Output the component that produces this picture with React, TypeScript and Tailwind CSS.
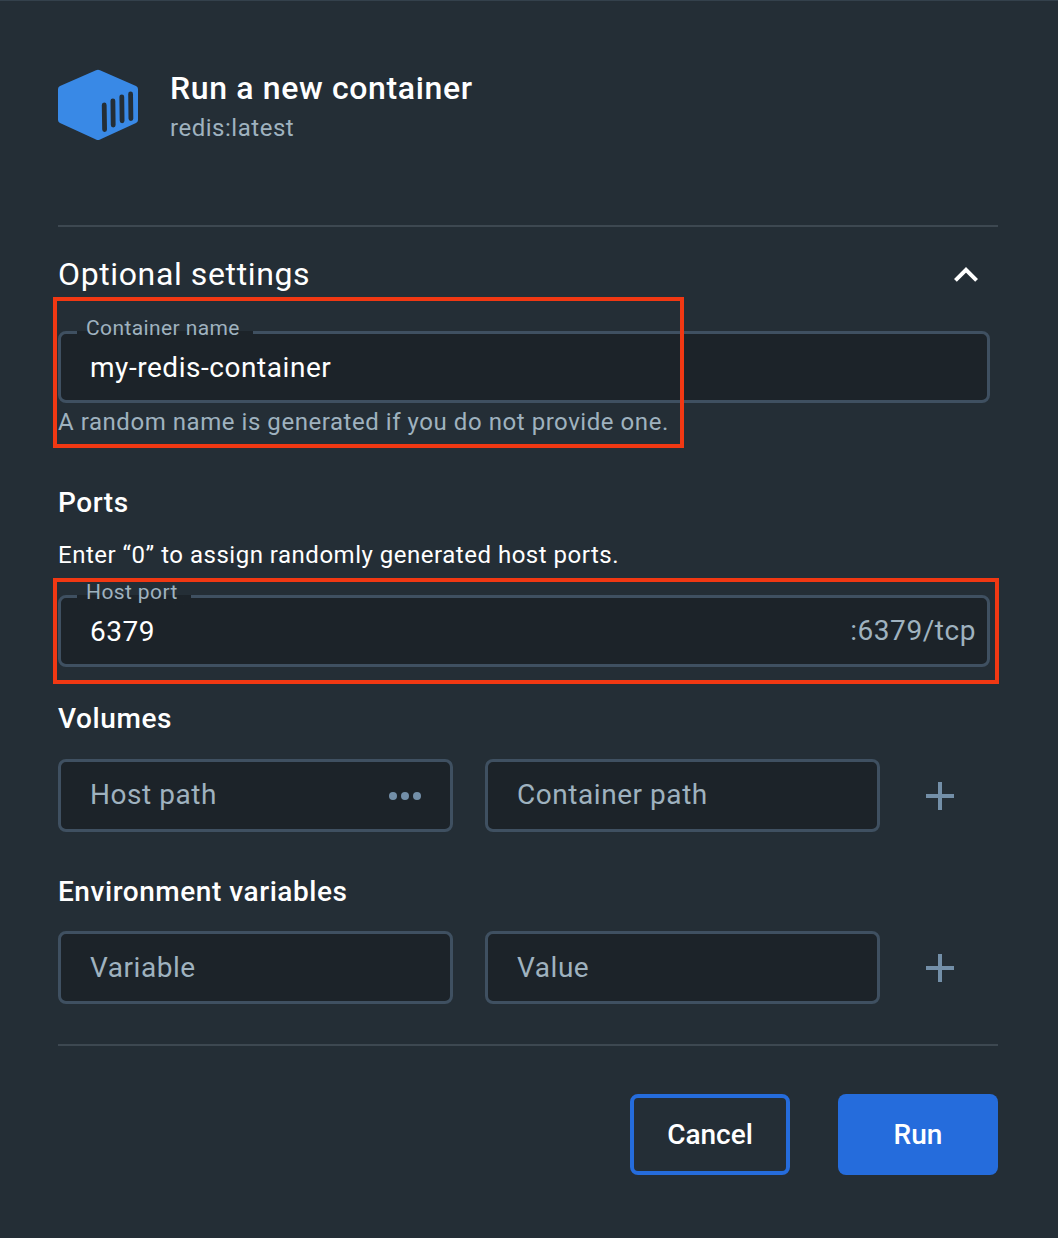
import React from 'react';

function Field({ className, label, children }: { className: string; label?: string; children: React.ReactNode }) {
  return (
    <div className={`relative flex items-center rounded-lg border-[3px] border-[#3f5061] bg-[#1c2329] pl-[29px] text-[28px] tracking-[0.55px] ${className}`}>
      {label && (
        <span className="absolute -top-[20px] left-4 h-[28px] bg-linear-to-b from-[#242e36] from-[17px] to-[#1c2329] to-[17px] pl-[9px] pr-[13px] text-[21px] leading-[28px] tracking-[0.4px] text-[#9fb2bf]">{label}</span>
      )}
      {children}
    </div>
  );
}

function Plus() {
  return (
    <svg className="ml-[46px]" width="28" height="28" viewBox="0 0 28 28" fill="#738fa8">
      <path d="M12 0h4v12h12v4H16v12h-4V16H0v-4h12z" />
    </svg>
  );
}

export default function App() {
  return (
    <main className="h-[1238px] w-[1058px] overflow-hidden border-t border-[#34414c] bg-[#242e36] pl-[58px] pr-[60px] font-[Roboto,sans-serif] text-white">
      <header className="flex h-[226px] items-start border-b-2 border-[#3d4851] pt-[68px]">
        <svg width="80" height="72" viewBox="0 0 80 72">
          <path fill="#3989e6" d="M38 1.200Q40 .2 42 1.200L78 17Q80 18 80 20V51Q80 53 78 54L42 70.500Q40 71.500 38 70.500L2 54Q0 53 0 51V20Q0 18 2 17Z" />
          <path stroke="#242e36" strokeWidth="4.800" strokeLinecap="round" d="M46.200 36l.4 24.500M54.900 31.800l.3 24.200M63.800 27.800l.3 24M72.600 25l.3 24.500" />
        </svg>
        <div className="ml-8">
          <h1 className="-mt-px text-[32px] font-medium leading-[40px] tracking-[0.64px]">Run a new container</h1>
          <p className="mt-px text-[24px] leading-[38px] tracking-[0.52px] text-[#9fb2bf]">redis:latest</p>
        </div>
      </header>

      <div className="flex h-[104px] items-start justify-between pr-5 pt-[27px]">
        <h2 className="text-[32px] leading-[40px] tracking-[0.62px]">Optional settings</h2>
        <svg className="mt-3" width="24" height="16" viewBox="0 0 24 16" fill="none" stroke="#fff" strokeWidth="4"><path d="M1.400 14.400L12 3.800l10.600 10.600" /></svg>
      </div>
      <Field className="h-[72px] w-[932px]" label="Container name"><span className="relative top-px">my-redis-container</span></Field>
      <p className="mt-[3px] text-[24px] leading-[32px] tracking-[0.55px] text-[#9fb2bf]">A random name is generated if you do not provide one.</p>

      <h3 className="mt-[48px] text-[28px] font-medium leading-[34px] tracking-[0.55px]">Ports</h3>
      <p className="mt-[19px] text-[24px] leading-[32px] tracking-[0.51px]">Enter “0” to assign randomly generated host ports.</p>
      <Field className="mt-6 h-[72px] w-[932px] justify-between pr-[11px]" label="Host port">
        <span className="relative top-px">6379</span><span className="text-[#9fb2bf]">:6379/tcp</span>
      </Field>

      <h3 className="mt-[35px] text-[28px] font-medium leading-[34px] tracking-[0.6px]">Volumes</h3>
      <div className="mt-[23px] flex items-center">
        <Field className="h-[73px] w-[395px] justify-between pr-[29px] text-[#9fb2bf]">
          <span className="relative -top-px">Host path</span>
          <svg width="32" height="8" viewBox="0 0 32 8" fill="#738fa8"><circle cx="4" cy="4" r="4" /><circle cx="16" cy="4" r="4" /><circle cx="28" cy="4" r="4" /></svg>
        </Field>
        <Field className="ml-8 h-[73px] w-[395px] text-[#9fb2bf]"><span className="relative -top-px">Container path</span></Field>
        <Plus />
      </div>

      <h3 className="mt-[43px] text-[28px] font-medium leading-[34px] tracking-[0.55px]">Environment variables</h3>
      <div className="mt-[22px] flex items-center">
        <Field className="h-[73px] w-[395px] text-[#9fb2bf]">Variable</Field>
        <Field className="ml-8 h-[73px] w-[395px] text-[#9fb2bf]">Value</Field>
        <Plus />
      </div>

      <footer className="mt-10 flex justify-end gap-12 border-t-2 border-[#3d4851] pt-12 text-[28px] font-medium">
        <button className="h-[81px] w-[160px] rounded-lg border-4 border-[#256cdc]">Cancel</button>
        <button className="h-[81px] w-[160px] rounded-lg bg-[#256cdc]">Run</button>
      </footer>
      <div className="absolute left-[53px] top-[297px] h-[151px] w-[631px] border-4 border-[#f13813]" />
      <div className="absolute left-[53px] top-[578px] h-[106px] w-[946px] border-4 border-[#f13813]" />
    </main>
  );
}
